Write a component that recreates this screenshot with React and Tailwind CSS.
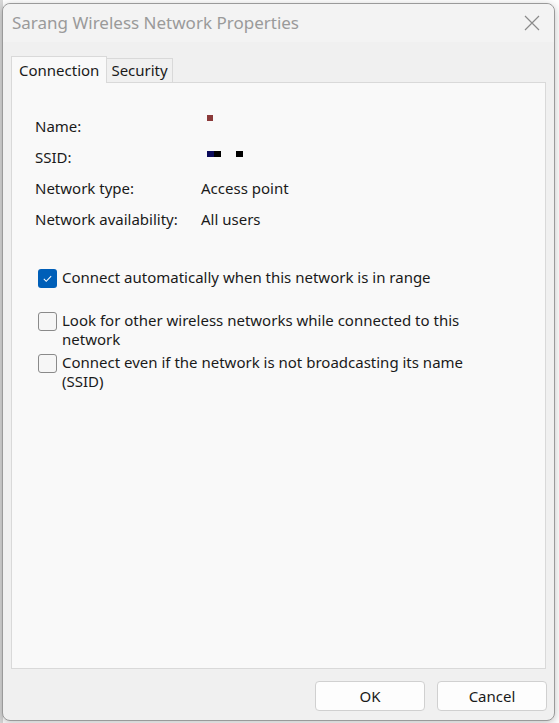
import React from "react";

const Check = ({ checked, children }) => (
  <label className="flex items-start gap-[5px]">
    {checked ? (
      <span className="mt-[1px] flex h-[19px] w-[19px] shrink-0 items-center justify-center rounded-[3px] bg-[#005fb8]">
        <svg width="11" height="11" viewBox="0 0 12 12" fill="none">
          <path d="M2 6.5l2.6 2.6L10 3.5" stroke="#fff" strokeWidth="1.1" />
        </svg>
      </span>
    ) : (
      <span className="mt-[1px] h-[19px] w-[19px] shrink-0 rounded-[3px] border border-[#8a8a8a] bg-[#f6f6f6]" />
    )}
    <span className="w-[410px] leading-[19px]">{children}</span>
  </label>
);

const Row = ({ label, children }) => (
  <div className="flex h-[31px] items-center">
    <div className="w-[166px]">{label}</div>
    <div className="relative flex h-full flex-1 items-center">{children}</div>
  </div>
);

export default function App() {
  return (
    <div
      className="relative h-[723px] w-[559px] overflow-hidden bg-white text-[#1a1a1a]"
      style={{ fontFamily: '"Segoe UI", "Noto Sans", sans-serif' }}
    >
      <div className="absolute left-0 top-0 h-[723px] w-[3px] bg-[#d8d8d8]" />
      <div className="absolute left-[2px] top-[3px] flex h-[718px] w-[553px] flex-col rounded-[8px] border border-[#9a9a9a] bg-[#f0f0f0] shadow-[0_2px_8px_rgba(0,0,0,0.25)]">
        {/* title bar */}
        <div className="flex h-[38px] items-center justify-between rounded-t-[8px] bg-[#f3f3f3] pl-[9px] pr-[14px]">
          <span className="text-[17px] text-[#9a9a9a]">Sarang Wireless Network Properties</span>
          <svg width="16" height="16" viewBox="0 0 16 16" stroke="#8a8a8a" strokeWidth="1.2">
            <path d="M1 1l14 14M15 1L1 15" />
          </svg>
        </div>

        {/* tabs */}
        <div className="mt-[14px] flex items-end pl-[8px] text-[15px]">
          <div className="relative z-10 -mb-px flex h-[27px] items-center border border-b-0 border-[#d9d9d9] bg-[#f9f9f9] px-[7px]">
            Connection
          </div>
          <div className="flex h-[24px] items-center border border-b-0 border-l-0 border-[#d9d9d9] bg-[#f0f0f0] px-[4px]">
            Security
          </div>
        </div>

        {/* panel */}
        <div className="mx-[8px] flex-1 border border-[#d9d9d9] bg-[#f9f9f9] px-[23px] pt-[28px] text-[15px]">
          <Row label="Name:">
            <span className="absolute left-[6px] top-[4px] h-[6px] w-[6px] bg-[#8b3a3a]" />
          </Row>
          <Row label="SSID:">
            <span className="absolute left-[6px] top-[9px] h-[6px] w-[7px] bg-[#0a0a5a]" />
            <span className="absolute left-[13px] top-[9px] h-[6px] w-[7px] bg-black" />
            <span className="absolute left-[35px] top-[9px] h-[6px] w-[7px] bg-black" />
          </Row>
          <Row label="Network type:">Access point</Row>
          <Row label="Network availability:">All users</Row>

          <div className="mt-[33px] pl-[3px]">
            <Check checked>Connect automatically when this network is in range</Check>
          </div>
          <div className="mt-[23px] flex flex-col gap-[4px] pl-[3px]">
            <Check>Look for other wireless networks while connected to this network</Check>
            <Check>Connect even if the network is not broadcasting its name (SSID)</Check>
          </div>
        </div>

        {/* buttons */}
        <div className="flex justify-end gap-[12px] px-[7px] pb-[9px] pt-[12px] text-[15px]">
          <button className="h-[30px] w-[110px] rounded-[4px] border border-[#d0d0d0] bg-[#fdfdfd]">OK</button>
          <button className="h-[30px] w-[110px] rounded-[4px] border border-[#d0d0d0] bg-[#fdfdfd]">Cancel</button>
        </div>
      </div>
    </div>
  );
}
